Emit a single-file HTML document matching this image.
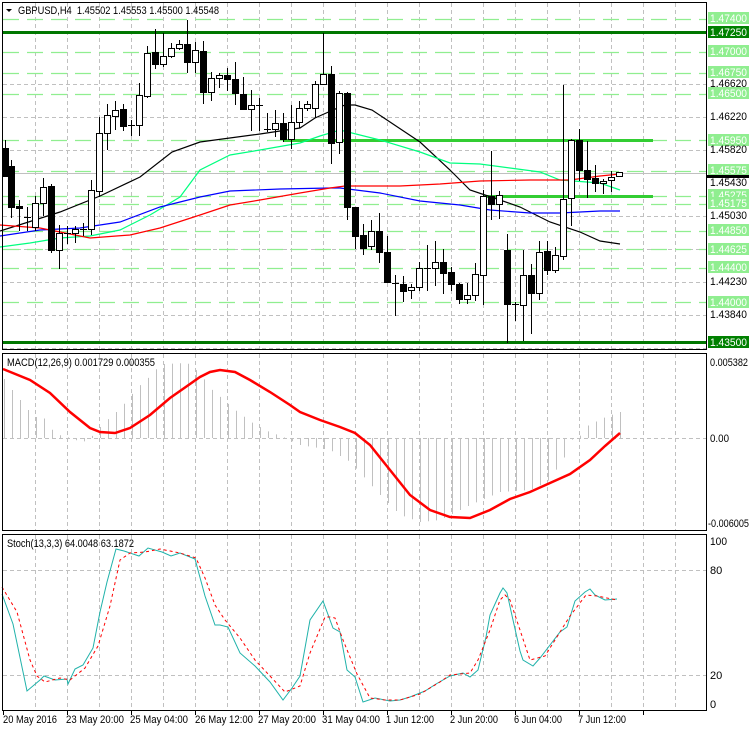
<!DOCTYPE html>
<html><head><meta charset="utf-8"><style>
html,body{margin:0;padding:0;background:#fff;}
svg{display:block;font-family:"Liberation Sans",sans-serif;font-size:11px;}
</style></head><body>
<svg id="s" width="749" height="731" viewBox="0 0 749 731" xmlns="http://www.w3.org/2000/svg">
<rect width="749" height="731" fill="#fff"/>
<g id="grid" stroke="#c0c0c0" stroke-dasharray="4,3" stroke-width="1"></g>
<g id="lv"></g>
<g id="ma" fill="none" stroke-width="1.2"></g>
<g id="cd"></g>
<g id="mc"></g>
<g id="st" fill="none"></g>
<g fill="none" stroke="#000" stroke-width="1">
<rect x="2.5" y="2.5" width="704" height="347"/>
<rect x="2.5" y="353.5" width="704" height="177"/>
<rect x="2.5" y="534.5" width="704" height="176"/>
</g>
<g id="ax"></g>
<g lengthAdjust="spacingAndGlyphs">
<text x="18" y="14" fill="#000" textLength="201" lengthAdjust="spacingAndGlyphs">GBPUSD,H4&#160; 1.45502 1.45553 1.45500 1.45548</text>
<text x="7" y="366" fill="#000" textLength="148" lengthAdjust="spacingAndGlyphs">MACD(12,26,9) 0.001729 0.000355</text>
<text x="7" y="547" fill="#000" textLength="127" lengthAdjust="spacingAndGlyphs">Stoch(13,3,3) 64.0048 63.1872</text>
</g>
<polygon points="6,9 12,9 9,12" fill="#000"/>
<g fill="#000">
<text x="710" y="366" textLength="38" lengthAdjust="spacingAndGlyphs">0.005382</text>
<text x="710" y="442" textLength="19" lengthAdjust="spacingAndGlyphs">0.00</text>
<text x="708" y="527" textLength="41" lengthAdjust="spacingAndGlyphs">-0.006005</text>
<text x="710" y="545" textLength="17" lengthAdjust="spacingAndGlyphs">100</text>
<text x="710" y="574">80</text>
<text x="710" y="679">20</text>
<text x="710" y="708">0</text>
<text x="3" y="723" textLength="54" lengthAdjust="spacingAndGlyphs">20 May 2016</text>
<text x="66" y="723" textLength="58" lengthAdjust="spacingAndGlyphs">23 May 20:00</text>
<text x="130" y="723" textLength="58" lengthAdjust="spacingAndGlyphs">25 May 04:00</text>
<text x="195" y="723" textLength="58" lengthAdjust="spacingAndGlyphs">26 May 12:00</text>
<text x="258" y="723" textLength="58" lengthAdjust="spacingAndGlyphs">27 May 20:00</text>
<text x="322" y="723" textLength="58" lengthAdjust="spacingAndGlyphs">31 May 04:00</text>
<text x="386" y="723" textLength="48" lengthAdjust="spacingAndGlyphs">1 Jun 12:00</text>
<text x="450" y="723" textLength="48" lengthAdjust="spacingAndGlyphs">2 Jun 20:00</text>
<text x="514" y="723" textLength="48" lengthAdjust="spacingAndGlyphs">6 Jun 04:00</text>
<text x="578" y="723" textLength="48" lengthAdjust="spacingAndGlyphs">7 Jun 12:00</text>
<text x="710" y="87" textLength="37" lengthAdjust="spacingAndGlyphs">1.46620</text>
<text x="710" y="120" textLength="37" lengthAdjust="spacingAndGlyphs">1.46220</text>
<text x="710" y="153" textLength="37" lengthAdjust="spacingAndGlyphs">1.45820</text>
<text x="710" y="186" textLength="37" lengthAdjust="spacingAndGlyphs">1.45430</text>
<text x="710" y="219" textLength="37" lengthAdjust="spacingAndGlyphs">1.45030</text>
<text x="710" y="285" textLength="37" lengthAdjust="spacingAndGlyphs">1.44230</text>
<text x="710" y="318" textLength="37" lengthAdjust="spacingAndGlyphs">1.43840</text>
</g>
</svg>
<script>
var NS="http://www.w3.org/2000/svg";
function el(p,t,a){var e=document.createElementNS(NS,t);for(var k in a)e.setAttribute(k,a[k]);document.getElementById(p).appendChild(e);return e;}
for(var x=35;x<706;x+=32){el("grid","line",{x1:x+.5,y1:3,x2:x+.5,y2:349});el("grid","line",{x1:x+.5,y1:354,x2:x+.5,y2:530});el("grid","line",{x1:x+.5,y1:535,x2:x+.5,y2:710});}
[84,117,150,216,249,282,315,348].forEach(function(y){el("grid","line",{x1:3,y1:y+.5,x2:706,y2:y+.5});});
el("grid","line",{x1:3,y1:438.5,x2:706,y2:438.5});
el("grid","line",{x1:3,y1:570.5,x2:706,y2:570.5});
el("grid","line",{x1:3,y1:675.5,x2:706,y2:675.5});
for(var x=3;x<706;x+=64){el("ax","line",{x1:x+.5,y1:711,x2:x+.5,y2:715,stroke:"#000"});}
el("lv","line",{x1:3,y1:173.5,x2:706,y2:173.5,stroke:"#c0c0c0"});
[19,52,73,94,140,171,196,204,231,249,268,302].forEach(function(y){el("lv","line",{x1:3,y1:y+.5,x2:706,y2:y+.5,stroke:"#90ee90","stroke-dasharray":"16,8","stroke-width":1.2});});
el("lv","rect",{x:3,y:31,width:703,height:3,fill:"#007700"});
el("lv","rect",{x:3,y:341,width:703,height:3,fill:"#007700"});
el("lv","rect",{x:283,y:139,width:370,height:3,fill:"#32cd32"});
el("lv","rect",{x:483,y:195,width:170,height:3,fill:"#32cd32"});
var labs=[[18,"1.47400",0],[32,"1.47250",1],[51,"1.47000",0],[72,"1.46750",0],[93,"1.46500",0],[140,"1.45950",0],[170,"1.45575",0],[195,"1.45275",0],[203,"1.45175",0],[230,"1.44850",0],[249,"1.44625",0],[267,"1.44400",0],[302,"1.44000",0],[342,"1.43500",1]];
labs.forEach(function(l){el("ax","rect",{x:708,y:l[0]-6,width:41,height:12,fill:l[2]?"#008000":"#90ee90"});var t=el("ax","text",{x:710,y:l[0]+4,fill:"#fff",textLength:37,lengthAdjust:"spacingAndGlyphs"});t.textContent=l[1];});
el("ax","rect",{x:707,y:175,width:42,height:3,fill:"#000"});
function pl(g,pts,c,extra){var a={points:pts,stroke:c};for(var k in extra)a[k]=extra[k];el(g,"polyline",a);}
pl("ma","0,231 60,212 100,196 140,177 172,152 200,142 260,134 300,128 315,118 333,110 345,105 355,105 372,110 390,122 420,142 450,170 470,190 500,200 520,207 550,222 580,232 600,241 620,244","#000");
pl("ma","0,247 30,243 60,238 90,236 120,230 150,215 180,197 200,170 230,155 260,150 300,143 320,136 340,130 380,140 420,152 450,163 480,164 510,168 540,172 560,180 600,183 620,190","#00ff7f");
pl("ma","0,236 40,230 80,228 120,222 160,207 200,197 230,191 280,189 330,188 340,188 380,193 420,201 460,205 490,210 530,213 560,213 600,211 620,211","#0000ff");
pl("ma","0,225 40,228 60,232 90,238 130,235 160,228 200,215 230,205 260,200 300,193 330,188 345,186 400,186 440,184 480,181 530,180 570,180 600,176 620,174","#ff0000");
var C=[[5,148,176,140,176,1],[11,166,207,160,217,1],[19,206,208,200,230,1],[27,217,217,207,230,0],[35,227,203,196,230,0],[43,203,187,178,215,0],[51,186,250,184,252,1],[59,250,233,225,268,0],[67,233,233,226,243,0],[75,233,229,226,242,0],[83,229,229,223,235,0],[91,229,190,180,234,0],[99,191,133,117,196,0],[107,133,115,104,149,0],[115,116,110,101,129,0],[123,109,126,104,130,1],[131,125,125,120,135,0],[139,125,95,83,135,0],[147,96,53,46,97,0],[155,52,64,29,68,1],[163,64,56,33,66,0],[171,56,48,43,57,0],[179,48,44,40,49,0],[187,44,62,20,72,1],[195,62,50,42,72,0],[203,51,92,41,103,1],[211,92,78,72,100,0],[219,78,75,73,87,0],[227,75,79,68,90,1],[235,79,93,62,104,1],[243,94,109,77,109,1],[251,109,105,90,130,0],[259,105,105,98,130,0],[267,129,129,113,131,0],[275,129,123,110,136,0],[283,123,139,113,141,1],[291,139,122,105,148,0],[299,122,108,101,127,0],[307,108,104,101,110,0],[315,108,84,81,117,0],[323,84,74,33,84,0],[331,74,143,66,163,1],[339,142,93,91,153,0],[347,93,207,92,219,1],[355,207,236,207,248,1],[363,235,248,224,254,1],[371,246,231,220,249,0],[379,231,252,213,262,1],[387,252,282,236,282,1],[395,283,283,275,315,0],[403,284,291,276,301,1],[411,290,287,284,298,0],[419,287,268,262,290,0],[427,268,268,245,290,0],[435,268,262,241,285,0],[443,262,273,249,293,1],[451,272,284,267,290,1],[459,284,299,283,303,1],[467,299,295,283,303,0],[475,295,274,263,300,0],[483,275,196,190,304,0],[491,196,204,151,219,1],[499,204,195,191,218,0],[507,250,304,234,342,1],[515,304,304,302,320,0],[523,305,275,250,340,0],[531,275,293,264,333,1],[539,293,252,241,299,0],[547,251,270,241,274,1],[555,270,255,247,272,0],[563,256,199,85,259,0],[571,198,140,139,225,0],[579,140,170,129,180,1],[587,170,179,141,197,1],[595,178,183,165,191,1],[603,183,181,179,193,0],[611,180,177,171,191,0],[619,176,172,172,176,0]];
C.forEach(function(c){var x=c[0],o=c[1],cl=c[2],h=c[3],l=c[4];
el("cd","line",{x1:x+.5,y1:h,x2:x+.5,y2:l+1,stroke:"#000"});
var t=Math.min(o,cl),b=Math.max(o,cl);
if(b-t<1){el("cd","line",{x1:x-3,y1:t+.5,x2:x+4,y2:t+.5,stroke:"#000"});}
else el("cd","rect",{x:x-2.5,y:t+.5,width:6,height:b-t,fill:c[5]?"#000":"#fff",stroke:"#000"});});
var K=[[4,379],[12,390],[20,400],[27,409],[35,417],[43,417],[51,429],[59,435],[67,437],[75,440],[83,442],[91,437],[99,428],[107,420],[115,413],[123,405],[131,395],[139,386],[147,379],[155,370],[163,364],[187,363],[195,369],[203,378],[211,389],[219,396],[227,403],[235,410],[251,422],[267,431],[283,437],[300,445],[330,450],[350,462],[380,495],[400,515],[420,522],[440,520],[470,505],[500,492],[530,490],[547,482],[555,471],[563,460],[571,440],[579,437],[587,426],[603,418],[619,412]];
function interp(x){for(var i=1;i<K.length;i++){if(x<=K[i][0]){var a=K[i-1],b=K[i];return a[1]+(b[1]-a[1])*(x-a[0])/(b[0]-a[0]);}}return K[K.length-1][1];}
for(var x=4;x<=620;x+=8){var y=interp(x);el("mc","line",{x1:x+.5,y1:438,x2:x+.5,y2:y,stroke:"#c0c0c0"});}
pl("mc","3,369 30,380 50,393 70,412 90,428 100,432 115,433 130,428 150,415 170,398 190,384 200,377 210,372 220,370 235,372 250,380 270,392 290,405 300,412 320,420 340,427 355,433 370,445 390,470 410,495 430,510 450,517 470,518 490,510 510,499 530,492 550,483 570,474 590,460 605,446 620,433","#ff0000",{"stroke-width":2.5,fill:"none"});
pl("st","2,594 13,624 27,691 40,680 44,676 55,680 67,679 68,684 75,669 83,665 93,648 100,612 107,582 116,549 124,551 139,556 148,548 162,552 171,556 180,553 195,559 205,596 215,625 220,625 228,627 240,653 255,666 270,682 283,700 292,688 300,676 310,620 323,601 333,628 340,632 347,670 355,677 363,702 375,698 390,701 400,700 410,697 425,691 436,684 450,676 463,673 470,677 478,670 486,637 490,615 500,593 503,588 507,593 513,620 520,651 523,660 533,666 540,658 550,645 560,632 567,627 575,601 585,592 590,589 595,595 605,600 617,599","#20b2aa");
pl("st","2,587 17,612 30,660 37,676 45,682 60,678 70,680 85,668 98,646 110,606 120,560 130,553 145,552 160,549 180,553 196,558 205,578 215,605 225,620 240,638 255,660 270,676 285,692 300,686 310,653 325,617 330,617 335,618 343,640 357,674 370,698 385,700 400,700 420,694 440,682 450,675 470,673 478,660 490,630 500,600 505,595 510,600 520,630 530,660 545,656 555,640 570,616 586,595 597,596 617,600","#ff0000",{"stroke-dasharray":"3,3"});
</script>
</body></html>
